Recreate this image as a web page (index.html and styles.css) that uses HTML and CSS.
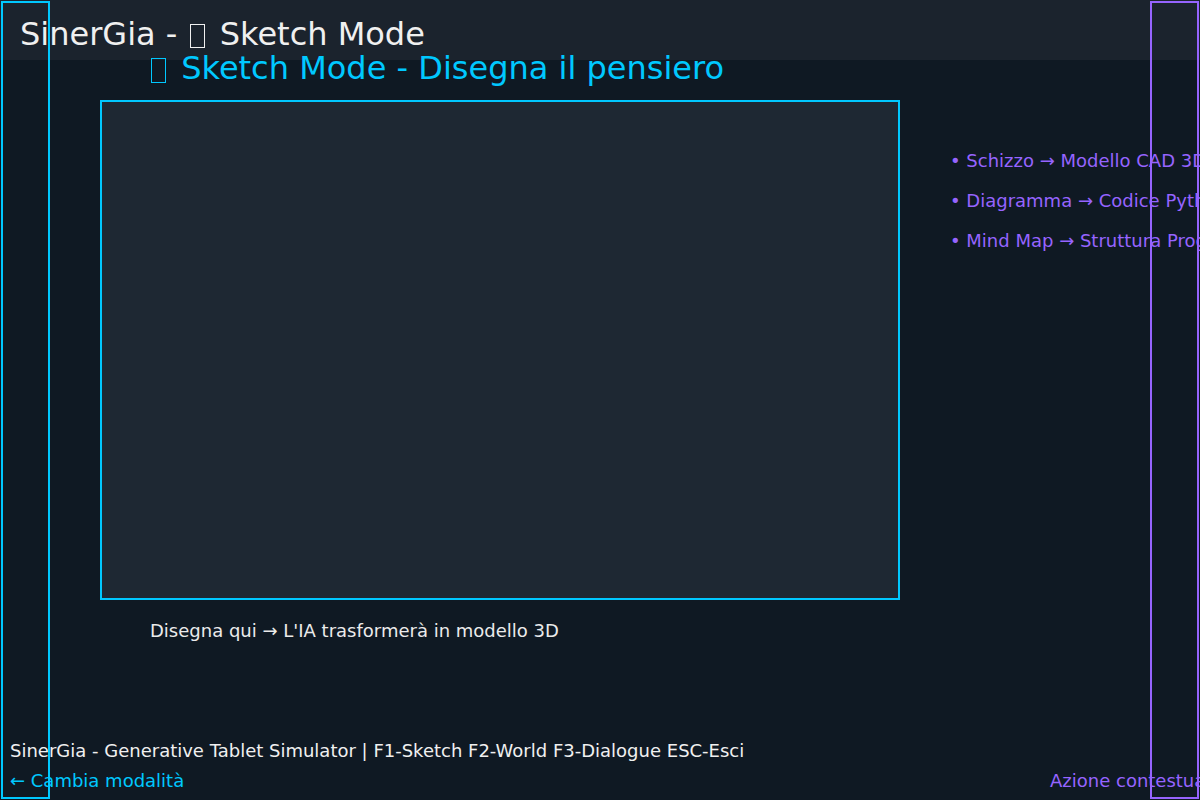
FILE: index.html
```html
<!DOCTYPE html>
<html lang="it">
<head>
<meta charset="utf-8">
<title>SinerGia - Sketch Mode</title>
<link rel="stylesheet" href="styles.css">
</head>
<body>
<div class="app">
  <header class="topbar">SinerGia - <span class="glyph-box" title="🎨"></span> Sketch Mode</header>
  <h1 class="mode-title"><span class="glyph-box" title="🎨"></span> Sketch Mode - Disegna il pensiero</h1>
  <main class="workspace">
    <div class="canvas-col">
      <div class="sketch-canvas"></div>
      <p class="canvas-hint">Disegna qui → L'IA trasformerà in modello 3D</p>
    </div>
    <ul class="transform-list">
      <li>• Schizzo → Modello CAD 3D</li>
      <li>• Diagramma → Codice Python</li>
      <li>• Mind Map → Struttura Progetto</li>
    </ul>
  </main>
  <footer class="statusbar">
    <div class="status-line">SinerGia - Generative Tablet Simulator | F1-Sketch F2-World F3-Dialogue ESC-Esci</div>
    <div class="action-row">
      <span class="action-left">← Cambia modalità</span>
      <span class="action-right">Azione contestuale</span>
    </div>
  </footer>
  <div class="side-zone side-left"></div>
  <div class="side-zone side-right"></div>
</div>
</body>
</html>
```

FILE: styles.css
```css
html, body {
  margin: 0;
  padding: 0;
}

body {
  background: #0f1923;
  font-family: "DejaVu Sans", sans-serif;
  overflow: hidden;
}

.app {
  position: relative;
  width: 1200px;
  height: 800px;
  display: flex;
  flex-direction: column;
  overflow: hidden;
  color: #f0f0f0;
}

.topbar {
  box-sizing: border-box;
  height: 60px;
  background: #1b232d;
  padding: 18px 0 0 20px;
  font-size: 32px;
  line-height: 32px;
  color: #f0f0f0;
  white-space: nowrap;
}

.glyph-box {
  display: inline-block;
  box-sizing: border-box;
  width: 15px;
  height: 24px;
  margin: 0 5px 0 2px;
  border: 1px solid currentColor;
  vertical-align: -3px;
}

.mode-title .glyph-box {
  margin-left: 1px;
  margin-right: 5px;
  height: 25px;
  vertical-align: -4px;
}

.mode-title {
  margin: -8px 0 0 150px;
  font-size: 32px;
  line-height: 32px;
  font-weight: normal;
  color: #00c8ff;
  white-space: nowrap;
}

.workspace {
  display: flex;
  margin-top: 16px;
}

.canvas-col {
  margin-left: 100px;
  width: 800px;
  flex: none;
}

.sketch-canvas {
  box-sizing: border-box;
  width: 800px;
  height: 500px;
  background: #1e2833;
  border: 2px solid #00c8ff;
}

.canvas-hint {
  margin: 16px 0 0 50px;
  font-size: 18px;
  line-height: 30px;
  color: #ebebeb;
  white-space: nowrap;
}

.transform-list {
  list-style: none;
  margin: 41px 0 0 50px;
  padding: 0;
  font-size: 18px;
  line-height: 40px;
  color: #9664ff;
  white-space: nowrap;
}

.statusbar {
  margin-top: auto;
  padding: 0 0 4px 10px;
  font-size: 18px;
  line-height: 30px;
  white-space: nowrap;
}

.status-line {
  color: #f0f0f0;
}

.action-row {
  display: grid;
  grid-template-columns: 1040px auto;
}

.action-left {
  color: #00c8ff;
}

.action-right {
  color: #9664ff;
}

.side-zone {
  position: absolute;
  top: 1px;
  width: 49px;
  height: 798px;
  box-sizing: border-box;
  border: 2px solid;
}

.side-left {
  left: 1px;
  border-color: #00c8ff;
}

.side-right {
  left: 1150px;
  border-color: #9664ff;
}
```
